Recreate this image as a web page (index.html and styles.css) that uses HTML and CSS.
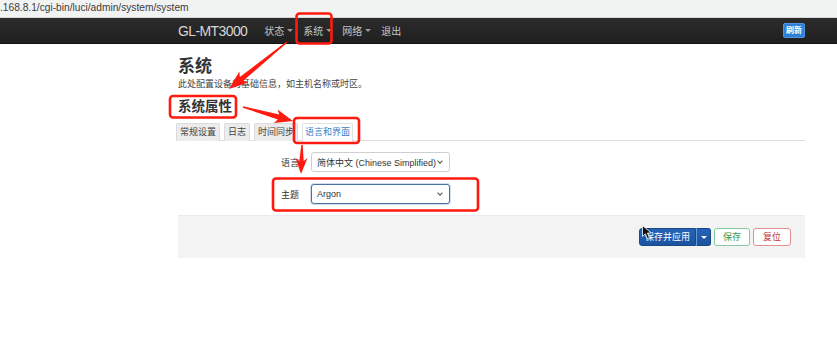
FILE: index.html
```html
<!DOCTYPE html>
<html lang="zh-CN">
<head>
<meta charset="utf-8">
<title>GL-MT3000 - 系统</title>
<link rel="stylesheet" href="styles.css">
</head>
<body>
<div class="addr">.168.8.1/cgi-bin/luci/admin/system/system</div>
<header class="navbar">
  <div class="nav-inner">
    <span class="brand">GL-MT3000</span>
    <ul class="menu">
      <li class="dd">状态<i class="caret"></i></li>
      <li class="dd">系统<i class="caret"></i></li>
      <li class="dd">网络<i class="caret"></i></li>
      <li>退出</li>
    </ul>
    <span class="refresh">刷新</span>
  </div>
</header>
<main class="main">
  <h2 class="title">系统</h2>
  <p class="desc">此处配置设备的基础信息，如主机名称或时区。</p>
  <h3 class="section">系统属性</h3>
  <ul class="tabs">
    <li class="tab">常规设置</li>
    <li class="tab">日志</li>
    <li class="tab">时间同步</li>
    <li class="tab active">语言和界面</li>
  </ul>
  <div class="form">
    <div class="row">
      <label class="lbl">语言</label>
      <div class="select"><span>简体中文 (Chinese Simplified)</span><i class="chev"></i></div>
    </div>
    <div class="row">
      <label class="lbl">主题</label>
      <div class="select focus"><span>Argon</span><i class="chev"></i></div>
    </div>
  </div>
  <div class="actions">
    <div class="btn-group">
      <span class="btn primary">保存并应用</span><span class="btn primary split"><i class="caret white"></i></span>
    </div>
    <span class="btn save">保存</span>
    <span class="btn reset">复位</span>
  </div>
</main>
<svg class="annot" width="837" height="360" viewBox="0 0 837 360">
  <g fill="none" stroke="#ff1a0f" stroke-width="2.6">
    <rect x="296.5" y="13.5" width="35" height="30" rx="3"/>
    <rect x="170" y="96" width="66" height="21.5" rx="3"/>
    <rect x="294" y="118" width="65" height="25" rx="3"/>
    <rect x="273" y="178.5" width="205" height="32" rx="3"/>
  </g>
  <g fill="#ff1a0f">
    <polygon points="287.44,42.54 243.0,80.9 248.17,82.5 229,89 239.35,71.62 239.86,77.0 286.56,41.46"/>
    <polygon points="243.19,106.33 279.23,114.56 277.55,109.42 293,121 273.77,122.9 277.88,119.38 242.81,107.67"/>
    <polygon points="302.7,145 303.7,161 307.5,158 301,174 295.5,158 299.3,161 301.3,145"/>
  </g>
  <path d="M642.5 225.5 L642.5 236.5 L645.3 233.8 L647.4 238.6 L649.4 237.7 L647.4 233 L651.3 233 Z" fill="#111" stroke="#fff" stroke-width="0.8"/>
</svg>
</body>
</html>
```
FILE: styles.css
```css
* { box-sizing: border-box; }
html, body { margin: 0; padding: 0; }
body {
  width: 837px;
  height: 360px;
  overflow: hidden;
  background: #fff;
  font-family: "Liberation Sans", "Noto Sans CJK SC", sans-serif;
  color: #333;
  position: relative;
}
ul { list-style: none; margin: 0; padding: 0; }

.addr {
  height: 18px;
  background: #f1f2f2;
  border-bottom: 1px solid #d8d8d8;
  font-size: 10.2px;
  line-height: 15px;
  color: #3c3c3c;
  white-space: nowrap;
}

.navbar {
  height: 26px;
  background: linear-gradient(#2c2c2c, #1f1f1f);
  border-bottom: 1px solid #141414;
}
.nav-inner {
  display: flex;
  align-items: center;
  height: 100%;
  padding-left: 178px;
  width: 805px;
}
.brand {
  font-size: 14px;
  color: #d6d6d6;
  letter-spacing: -0.6px;
  margin-right: 17px;
}
.menu { display: flex; gap: 10px; }
.menu li {
  font-size: 10px;
  color: #c4c4c4;
  display: flex;
  align-items: center;
}
.caret {
  display: inline-block;
  width: 0;
  height: 0;
  border-top: 3px solid #9a9a9a;
  border-left: 3px solid transparent;
  border-right: 3px solid transparent;
  margin-left: 3px;
}
.caret.white { border-top-color: #fff; margin: 0; }
.refresh {
  margin-left: auto;
  background: #2f7fd8;
  color: #fff;
  font-size: 8px;
  font-weight: bold;
  padding: 1px 2px;
  border-radius: 2px;
  line-height: 11px;
  border: 1px solid #4f95e0;
}

.main {
  margin-left: 178px;
  width: 627px;
}
.title {
  margin: 12px 0 0;
  font-size: 17px;
  line-height: 22px;
  font-weight: 600;
  color: #333;
}
.desc {
  margin: 0;
  font-size: 9px;
  line-height: 13px;
  color: #444;
}
.section {
  margin: 6px 0 0;
  font-size: 13.5px;
  line-height: 20px;
  font-weight: 700;
  color: #333;
}
.tabs {
  display: flex;
  gap: 4px;
  margin: 6px 0 0 -2px;
  border-bottom: 1px solid #dedede;
  height: 18px;
}
.tab {
  height: 18px;
  padding: 0 3px;
  font-size: 9px;
  line-height: 16px;
  color: #444;
  background: #ececec;
  border: 1px solid #dcdcdc;
  border-bottom: none;
  border-radius: 2px 2px 0 0;
}
.tab.active {
  background: #fff;
  color: #3a7cc6;
  padding: 0 2px;
  border-color: #e2e2e2;
  margin-bottom: -1px;
  height: 19px;
}

.form {
  padding-top: 11px;
  display: flex;
  flex-direction: column;
  gap: 12px;
}
.row {
  display: flex;
  align-items: center;
  gap: 12px;
}
.lbl {
  width: 121px;
  text-align: right;
  font-size: 9px;
  color: #333;
}
.select {
  width: 139px;
  height: 20px;
  border: 1px solid #cfcfcf;
  border-radius: 3px;
  background: #fff;
  display: flex;
  align-items: center;
  padding-left: 5px;
  font-size: 9px;
  color: #333;
  position: relative;
}
.select.focus {
  border-color: #4a72a4;
  box-shadow: 0 0 0 1px rgba(80, 120, 180, 0.25);
}
.chev {
  position: absolute;
  right: 7px;
  top: 6px;
  width: 4px;
  height: 4px;
  border-right: 1px solid #555;
  border-bottom: 1px solid #555;
  transform: rotate(45deg);
}

.actions {
  margin-top: 11px;
  height: 43px;
  background: #f3f3f3;
  border-top: 1px solid #ebebeb;
  display: flex;
  justify-content: flex-end;
  align-items: flex-start;
  padding: 12px 14px 0 0;
  gap: 3px;
}
.btn-group { display: flex; }
.btn {
  height: 18px;
  font-size: 9px;
  line-height: 16px;
  border-radius: 3px;
  border: 1px solid;
  display: flex;
  align-items: center;
  justify-content: center;
}
.btn.primary {
  background: linear-gradient(#2563b8, #1b52a0);
  border-color: #174888;
  color: #fff;
  width: 57px;
  border-radius: 3px 0 0 3px;
}
.btn.primary.split {
  width: 15px;
  border-radius: 0 3px 3px 0;
  border-left: 1px solid #6e98d0;
}
.btn.save {
  width: 36px;
  background: #fff;
  border-color: #86c9a3;
  color: #2f9a55;
}
.btn.reset {
  width: 38px;
  background: #fff;
  border-color: #e29090;
  color: #c73431;
}

.annot {
  position: absolute;
  top: 0;
  left: 0;
  pointer-events: none;
}
```
